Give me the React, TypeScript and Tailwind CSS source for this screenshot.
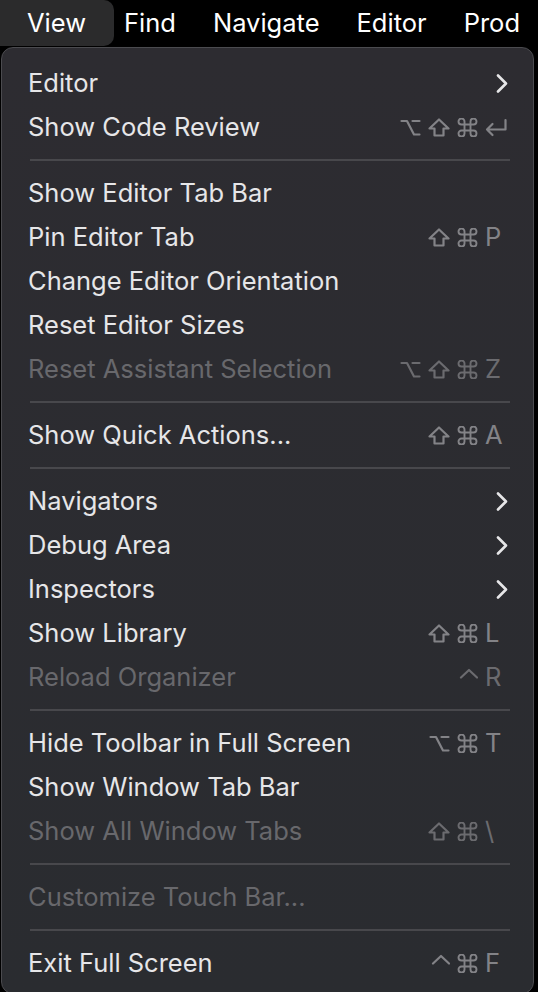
import React from "react";

type Mod = "opt" | "shift" | "cmd" | "ctrl";

type Item =
  | { kind: "sep" }
  | {
      kind: "item";
      label: string;
      disabled?: boolean;
      submenu?: boolean;
      mods?: Mod[];
      keyChar?: string;
    };

const items: Item[] = [
  { kind: "item", label: "Editor", submenu: true },
  { kind: "item", label: "Show Code Review", mods: ["opt", "shift", "cmd"], keyChar: "return" },
  { kind: "sep" },
  { kind: "item", label: "Show Editor Tab Bar" },
  { kind: "item", label: "Pin Editor Tab", mods: ["shift", "cmd"], keyChar: "P" },
  { kind: "item", label: "Change Editor Orientation" },
  { kind: "item", label: "Reset Editor Sizes" },
  { kind: "item", label: "Reset Assistant Selection", disabled: true, mods: ["opt", "shift", "cmd"], keyChar: "Z" },
  { kind: "sep" },
  { kind: "item", label: "Show Quick Actions...", mods: ["shift", "cmd"], keyChar: "A" },
  { kind: "sep" },
  { kind: "item", label: "Navigators", submenu: true },
  { kind: "item", label: "Debug Area", submenu: true },
  { kind: "item", label: "Inspectors", submenu: true },
  { kind: "item", label: "Show Library", mods: ["shift", "cmd"], keyChar: "L" },
  { kind: "item", label: "Reload Organizer", disabled: true, mods: ["ctrl"], keyChar: "R" },
  { kind: "sep" },
  { kind: "item", label: "Hide Toolbar in Full Screen", mods: ["opt", "cmd"], keyChar: "T" },
  { kind: "item", label: "Show Window Tab Bar" },
  { kind: "item", label: "Show All Window Tabs", disabled: true, mods: ["shift", "cmd"], keyChar: "\\" },
  { kind: "sep" },
  { kind: "item", label: "Customize Touch Bar...", disabled: true },
  { kind: "sep" },
  { kind: "item", label: "Exit Full Screen", mods: ["ctrl", "cmd"], keyChar: "F" },
];

const ModGlyph: React.FC<{ mod: Mod }> = ({ mod }) => {
  const common = {
    fill: "none",
    stroke: "currentColor",
    strokeWidth: 2.2,
    strokeLinecap: "round" as const,
    strokeLinejoin: "round" as const,
  };
  if (mod === "opt")
    return (
      <svg width="21" height="19" viewBox="0 0 21 19">
        <path d="M1.5 3H7L14 16.5H19.5M12.5 3H19.5" {...common} />
      </svg>
    );
  if (mod === "shift")
    return (
      <svg width="22" height="19" viewBox="0 0 22 19">
        <path d="M11 1.5L20.5 10.5H15.5V17.5H6.5V10.5H1.5Z" {...common} />
      </svg>
    );
  if (mod === "cmd")
    return (
      <svg width="21" height="19" viewBox="2.5 2.5 19 19">
        <path
          d="M15 6v12a3 3 0 1 0 3-3H6a3 3 0 1 0 3 3V6a3 3 0 1 0-3 3h12a3 3 0 1 0-3-3"
          {...common}
          strokeWidth={1.9}
        />
      </svg>
    );
  return (
    <svg width="21" height="19" viewBox="0 0 21 19">
      <path d="M4 9.5L12 2L20 9.5" {...common} />
    </svg>
  );
};

const Shortcut: React.FC<{ mods: Mod[]; keyChar: string }> = ({ mods, keyChar }) => (
  <div className="flex items-center">
    <div className="flex items-center justify-end gap-[7px]">
      {mods.map((m, i) => (
        <ModGlyph key={i} mod={m} />
      ))}
    </div>
    <div className="ml-[6px] w-[26px] flex items-center">
      {keyChar === "return" ? (
        <svg width="24" height="19" viewBox="0 0 24 19">
          <path
            d="M21.5 2V11.5H3M8.5 6L3 11.5L8.5 17"
            fill="none"
            stroke="currentColor"
            strokeWidth="2.2"
            strokeLinecap="round"
            strokeLinejoin="round"
          />
        </svg>
      ) : (
        <span className="pl-[1px] leading-none">{keyChar}</span>
      )}
    </div>
  </div>
);

const Chevron = () => (
  <svg width="12" height="19" viewBox="0 0 12 19" className="mr-[2px]">
    <path
      d="M2 1.5L10 9.5L2 17.5"
      fill="none"
      stroke="currentColor"
      strokeWidth="2.6"
      strokeLinecap="round"
      strokeLinejoin="round"
    />
  </svg>
);

export default function App() {
  return (
    <div
      className="w-[538px] h-[992px] overflow-hidden bg-black text-[25.5px]"
      style={{ fontFamily: "Inter, 'Noto Sans', sans-serif" }}
    >
      {/* menu bar */}
      <div className="h-[47px] flex items-center text-white">
        <div className="h-[46px] w-[114px] pl-[27px] flex items-center bg-[#2b2b2c] rounded-r-[10px] self-start">
          View
        </div>
        <div className="ml-[10px] flex items-center gap-[37px] whitespace-nowrap">
          <span>Find</span>
          <span>Navigate</span>
          <span>Editor</span>
          <span>Prod</span>
        </div>
      </div>

      {/* dropdown */}
      <div className="ml-[1px] w-[533px] rounded-[12px] border border-[#4b4b4f] bg-gradient-to-b from-[#2d2c31] to-[#2a2c30] pt-[13px] pb-[8px] shadow-[0_0_0_1px_#000]">
        {items.map((it, i) =>
          it.kind === "sep" ? (
            <div key={i} className="h-[22px] flex items-center pl-[28px] pr-[23px]">
              <div className="h-[2px] w-full bg-[#48484c]" />
            </div>
          ) : (
            <div
              key={i}
              className={`h-[44px] flex items-center pl-[26px] pr-[23px] ${
                it.disabled ? "text-[#68686c]" : "text-[#e6e6e8]"
              }`}
            >
              <span className="flex-1 whitespace-nowrap">{it.label}</span>
              {it.submenu && (
                <span className="text-[#e6e6e8]">
                  <Chevron />
                </span>
              )}
              {it.mods && it.keyChar && (
                <span className={it.disabled ? "text-[#6b6b6f]" : "text-[#838387]"}>
                  <Shortcut mods={it.mods} keyChar={it.keyChar} />
                </span>
              )}
            </div>
          )
        )}
      </div>
    </div>
  );
}
